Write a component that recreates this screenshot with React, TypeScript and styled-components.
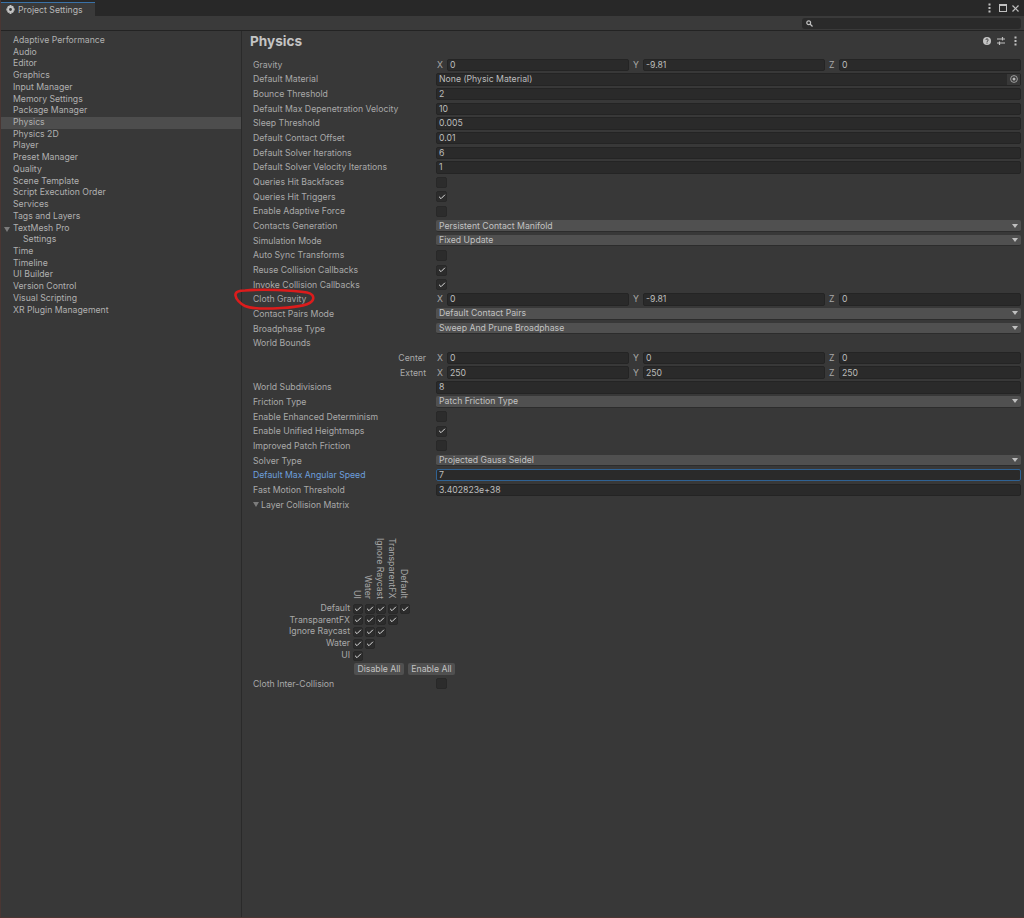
import React from 'react';
import styled, { createGlobalStyle } from 'styled-components';
import { Check } from 'lucide-react';

const GlobalStyle = createGlobalStyle`
  html, body {
    margin: 0;
    padding: 0;
    background: #383838;
  }
  body {
    font-family: Inter, "Liberation Sans", sans-serif;
    font-size: 8.7px;
    color: #b4b4b4;
  }
`;

const Page = styled.div`
  position: relative;
  width: 1024px;
  height: 918px;
  overflow: hidden;
  display: flex;
  flex-direction: column;
  background: #383838;

  &::after {
    content: '';
    position: absolute;
    inset: 0;
    border-left: 1px solid #4a3633;
    border-bottom: 1px solid #4a3633;
    pointer-events: none;
  }
`;

const TabBar = styled.div`
  height: 16px;
  display: flex;
  justify-content: space-between;
  background: #282828;
`;

const Tab = styled.div`
  width: 95px;
  height: 14px;
  margin-top: 2px;
  box-sizing: border-box;
  border-top: 1px solid #3a72a8;
  background: #3a3a3a;
  display: flex;
  align-items: center;
  gap: 3px;
  padding-left: 6px;
  color: #b8b8b8;
`;

const WindowControls = styled.div`
  display: flex;
  align-items: center;
  padding-right: 5px;
  color: #c0c0c0;
`;

const MaximizeSlot = styled.span`
  display: flex;
  margin: 0 5px 0 8px;
`;

const Toolbar = styled.div`
  height: 15px;
  display: flex;
  align-items: center;
  justify-content: flex-end;
  padding-right: 3px;
  box-sizing: border-box;
  background: #3a3a3a;
  border-bottom: 1px solid #232323;
`;

const Search = styled.div`
  width: 219px;
  height: 11px;
  background: #2a2a2a;
  border-radius: 3px;
  display: flex;
  align-items: center;
  padding-left: 4px;
  box-sizing: border-box;
  color: #c0c0c0;
`;

const Body = styled.div`
  flex: 1;
  display: flex;
  min-height: 0;
`;

const Sidebar = styled.div`
  width: 242px;
  box-sizing: border-box;
  padding-top: 4px;
  border-right: 1px solid #2a2a2a;
  background: #383838;
`;

const NavItem = styled.div<{ $selected?: boolean; $indent?: number }>`
  height: 11.72px;
  line-height: 11.72px;
  padding-left: ${(p) => p.$indent ?? 13}px;
  background: ${(p) => (p.$selected ? '#4d4d4d' : 'transparent')};
  color: #b0b0b0;
  white-space: nowrap;
  position: relative;
`;

const NavArrow = styled.span`
  position: absolute;
  left: 4px;
  top: 4px;
  width: 0;
  height: 0;
  border-left: 3px solid transparent;
  border-right: 3px solid transparent;
  border-top: 5px solid #7c7c7c;
`;

const Main = styled.div`
  flex: 1;
  min-width: 0;
  padding: 0 3px 0 11px;
`;

const Header = styled.div`
  height: 26.5px;
  box-sizing: border-box;
  display: flex;
  align-items: center;
  justify-content: space-between;
  padding: 0 4.5px 6px 0;
`;

const Title = styled.div`
  font-size: 13.6px;
  font-weight: 700;
  color: #c4c4c4;
  margin-left: -3px;
`;

const HeaderIcons = styled.div`
  display: flex;
  align-items: center;
  color: #c0c0c0;
`;

const SlidersSlot = styled.span`
  display: flex;
  margin: 0 9px 0 6px;
`;

const Row = styled.div`
  height: 14.66px;
  display: flex;
  align-items: center;
`;

const Label = styled.div<{ $active?: boolean; $sub?: boolean }>`
  width: 183px;
  flex: none;
  box-sizing: border-box;
  white-space: nowrap;
  color: ${(p) => (p.$active ? '#6d9fdc' : '#a9a9a9')};
  text-align: ${(p) => (p.$sub ? 'right' : 'left')};
  padding-right: ${(p) => (p.$sub ? '10px' : '0')};
`;

const Field = styled.div<{ $focused?: boolean }>`
  flex: 1;
  min-width: 0;
  height: 12.5px;
  box-sizing: border-box;
  display: flex;
  align-items: center;
  justify-content: space-between;
  padding-left: 2px;
  background: #2a2a2a;
  color: #bdbdbd;
  border-radius: 2px;
  border: 1px solid ${(p) => (p.$focused ? '#2f6294' : '#242424')};
`;

const Vector = styled.div`
  flex: 1;
  min-width: 0;
  display: flex;
  gap: 3px;
`;

const Axis = styled.div`
  flex: 1;
  min-width: 0;
  display: flex;
  align-items: center;
`;

const AxisName = styled.span`
  width: 11px;
  flex: none;
  padding-left: 1px;
  box-sizing: border-box;
  color: #a9a9a9;
`;

const PickerButton = styled.span`
  width: 13px;
  height: 100%;
  background: #383838;
  display: flex;
  align-items: center;
  justify-content: center;
  color: #b8b8b8;
`;

const Dropdown = styled.div`
  flex: 1;
  height: 11.5px;
  display: flex;
  align-items: center;
  justify-content: space-between;
  padding: 0 3px;
  box-sizing: border-box;
  background: #505050;
  color: #c2c2c2;
  border-radius: 2px;
  border-bottom: 1px solid #2c2c2c;
`;

const Caret = styled.span`
  width: 0;
  height: 0;
  border-left: 3px solid transparent;
  border-right: 3px solid transparent;
  border-top: 4px solid #c0c0c0;
`;

const Box = styled.div<{ $small?: boolean }>`
  width: ${(p) => (p.$small ? '10px' : '11px')};
  height: ${(p) => (p.$small ? '10px' : '11px')};
  flex: none;
  box-sizing: border-box;
  background: #2c2c2c;
  border: 1px solid #282828;
  border-radius: 2px;
  display: flex;
  align-items: center;
  justify-content: center;
  color: #dedede;
`;

const FoldLabel = styled.div`
  display: flex;
  align-items: center;
  gap: 2px;
  color: #a9a9a9;
`;

const FoldArrow = styled.span`
  width: 0;
  height: 0;
  border-left: 3px solid transparent;
  border-right: 3px solid transparent;
  border-top: 5px solid #7c7c7c;
`;

const Matrix = styled.div`
  display: grid;
  grid-template-columns: 98px 1fr;
  padding-top: 24px;
`;

const ColumnHeads = styled.div`
  grid-column: 2;
  height: 67px;
  margin-left: -1px;
  padding-bottom: 4px;
  box-sizing: border-box;
  display: flex;
  align-items: flex-end;
`;

const ColumnHead = styled.div`
  width: 11.72px;
  flex: none;
  writing-mode: vertical-rl;
  line-height: 11.72px;
  white-space: nowrap;
  color: #a9a9a9;
`;

const MatrixLabel = styled.div`
  height: 11.72px;
  line-height: 11.72px;
  text-align: right;
  padding-right: 1px;
  color: #a9a9a9;
  white-space: nowrap;
`;

const MatrixCells = styled.div`
  height: 11.72px;
  display: flex;
  align-items: center;
  gap: 1.72px;
  padding-left: 2px;
`;

const MatrixButtons = styled.div`
  grid-column: 2;
  display: flex;
  gap: 4px;
  padding: 2px 0 0 3px;
`;

const MiniButton = styled.div<{ $width: number }>`
  width: ${(p) => p.$width}px;
  height: 12px;
  line-height: 12px;
  text-align: center;
  background: #505050;
  color: #c2c2c2;
  border-radius: 2px;
`;

const ClothRow = styled(Row)`
  margin-top: 1px;
`;

const RedCircle = styled.svg`
  position: absolute;
  left: 231px;
  top: 287px;
`;

const navItems = [
  'Adaptive Performance', 'Audio', 'Editor', 'Graphics', 'Input Manager', 'Memory Settings',
  'Package Manager', 'Physics', 'Physics 2D', 'Player', 'Preset Manager', 'Quality',
  'Scene Template', 'Script Execution Order', 'Services', 'Tags and Layers', 'TextMesh Pro',
  'Settings', 'Time', 'Timeline', 'UI Builder', 'Version Control', 'Visual Scripting',
  'XR Plugin Management',
];

type Setting =
  | { kind: 'vector'; label: string; values: string[]; sub?: boolean }
  | { kind: 'text'; label: string; value: string; active?: boolean; focused?: boolean; picker?: boolean }
  | { kind: 'check'; label: string; checked: boolean }
  | { kind: 'select'; label: string; value: string }
  | { kind: 'plain'; label: string };

const settings: Setting[] = [
  { kind: 'vector', label: 'Gravity', values: ['0', '-9.81', '0'] },
  { kind: 'text', label: 'Default Material', value: 'None (Physic Material)', picker: true },
  { kind: 'text', label: 'Bounce Threshold', value: '2' },
  { kind: 'text', label: 'Default Max Depenetration Velocity', value: '10' },
  { kind: 'text', label: 'Sleep Threshold', value: '0.005' },
  { kind: 'text', label: 'Default Contact Offset', value: '0.01' },
  { kind: 'text', label: 'Default Solver Iterations', value: '6' },
  { kind: 'text', label: 'Default Solver Velocity Iterations', value: '1' },
  { kind: 'check', label: 'Queries Hit Backfaces', checked: false },
  { kind: 'check', label: 'Queries Hit Triggers', checked: true },
  { kind: 'check', label: 'Enable Adaptive Force', checked: false },
  { kind: 'select', label: 'Contacts Generation', value: 'Persistent Contact Manifold' },
  { kind: 'select', label: 'Simulation Mode', value: 'Fixed Update' },
  { kind: 'check', label: 'Auto Sync Transforms', checked: false },
  { kind: 'check', label: 'Reuse Collision Callbacks', checked: true },
  { kind: 'check', label: 'Invoke Collision Callbacks', checked: true },
  { kind: 'vector', label: 'Cloth Gravity', values: ['0', '-9.81', '0'] },
  { kind: 'select', label: 'Contact Pairs Mode', value: 'Default Contact Pairs' },
  { kind: 'select', label: 'Broadphase Type', value: 'Sweep And Prune Broadphase' },
  { kind: 'plain', label: 'World Bounds' },
  { kind: 'vector', label: 'Center', values: ['0', '0', '0'], sub: true },
  { kind: 'vector', label: 'Extent', values: ['250', '250', '250'], sub: true },
  { kind: 'text', label: 'World Subdivisions', value: '8' },
  { kind: 'select', label: 'Friction Type', value: 'Patch Friction Type' },
  { kind: 'check', label: 'Enable Enhanced Determinism', checked: false },
  { kind: 'check', label: 'Enable Unified Heightmaps', checked: true },
  { kind: 'check', label: 'Improved Patch Friction', checked: false },
  { kind: 'select', label: 'Solver Type', value: 'Projected Gauss Seidel' },
  { kind: 'text', label: 'Default Max Angular Speed', value: '7', active: true, focused: true },
  { kind: 'text', label: 'Fast Motion Threshold', value: '3.402823e+38' },
];

const layers = ['Default', 'TransparentFX', 'Ignore Raycast', 'Water', 'UI'];

const Tick = () => <Check size={8} strokeWidth={3} />;

const Kebab = () => (
  <svg width="3" height="10" viewBox="0 0 3 10" fill="currentColor">
    <rect x="0.5" y="0.5" width="2" height="2" />
    <rect x="0.5" y="4" width="2" height="2" />
    <rect x="0.5" y="7.5" width="2" height="2" />
  </svg>
);

const Gear = () => (
  <svg width="9" height="9" viewBox="0 0 10 10" fill="#c4c4c4">
    <path
      fillRule="evenodd"
      d="M4 0h2l.3 1.4 1-.5 1.5 1.4-.6 1.1L9.600 4v2l-1.400.4.600 1.100-1.500 1.400-1-.5L6 10H4l-.3-1.600-1 .5L1.200 7.500l.6-1.100L.4 6V4l1.400-.5-.6-1.100L2.700.900l1 .5L4 0zM5 3.400a1.600 1.600 0 1 0 0 3.200 1.600 1.600 0 0 0 0-3.200z"
    />
  </svg>
);

const Maximize = () => (
  <svg width="8" height="8" viewBox="0 0 8 8" fill="none" stroke="currentColor">
    <rect x="0.5" y="0.5" width="7" height="7" />
    <line x1="0" y1="1.500" x2="8" y2="1.500" />
  </svg>
);

const CloseIcon = () => (
  <svg width="7" height="7" viewBox="0 0 7 7" stroke="currentColor" strokeWidth="1.200">
    <line x1="0.500" y1="0.500" x2="6.500" y2="6.500" />
    <line x1="6.500" y1="0.500" x2="0.500" y2="6.500" />
  </svg>
);

const SearchIcon = () => (
  <svg width="7" height="7" viewBox="0 0 7 7" fill="none" stroke="currentColor" strokeWidth="1.200">
    <circle cx="2.700" cy="2.700" r="1.900" />
    <line x1="4" y1="4" x2="6.500" y2="6.500" />
  </svg>
);

const Help = () => (
  <svg width="8" height="8" viewBox="0 0 8 8">
    <circle cx="4" cy="4" r="4" fill="#c4c4c4" />
    <path d="M2.800 3a1.200 1.100 0 1 1 1.800 1c-.5.300-.6.500-.6.900" fill="none" stroke="#383838" strokeWidth="1" />
    <rect x="3.500" y="5.600" width="1" height="1" fill="#383838" />
  </svg>
);

const Sliders = () => (
  <svg width="8" height="8" viewBox="0 0 8 8" stroke="currentColor" fill="none">
    <path d="M0 2h8M0 6h8" />
    <path d="M5.500 0v3.500M2.500 4.500V8" strokeWidth="1.200" />
  </svg>
);

const Target = () => (
  <svg width="8" height="8" viewBox="0 0 8 8" fill="none">
    <circle cx="4" cy="4" r="3.400" stroke="currentColor" strokeWidth="0.800" />
    <circle cx="4" cy="4" r="1.500" fill="currentColor" />
  </svg>
);

const SettingRow = ({ item }: { item: Setting }) => {
  if (item.kind === 'vector') {
    return (
      <Row>
        <Label $sub={item.sub}>{item.label}</Label>
        <Vector>
          {item.values.map((value, i) => (
            <Axis key={'XYZ'[i]}>
              <AxisName>{'XYZ'[i]}</AxisName>
              <Field>{value}</Field>
            </Axis>
          ))}
        </Vector>
      </Row>
    );
  }
  if (item.kind === 'text') {
    return (
      <Row>
        <Label $active={item.active}>{item.label}</Label>
        <Field $focused={item.focused}>
          {item.value}
          {item.picker && (
            <PickerButton>
              <Target />
            </PickerButton>
          )}
        </Field>
      </Row>
    );
  }
  if (item.kind === 'check') {
    return (
      <Row>
        <Label>{item.label}</Label>
        <Box>{item.checked && <Tick />}</Box>
      </Row>
    );
  }
  if (item.kind === 'select') {
    return (
      <Row>
        <Label>{item.label}</Label>
        <Dropdown>
          {item.value}
          <Caret />
        </Dropdown>
      </Row>
    );
  }
  return (
    <Row>
      <Label>{item.label}</Label>
    </Row>
  );
};

const App = () => (
  <Page>
    <GlobalStyle />
    <TabBar>
      <Tab>
        <Gear />
        Project Settings
      </Tab>
      <WindowControls>
        <Kebab />
        <MaximizeSlot>
          <Maximize />
        </MaximizeSlot>
        <CloseIcon />
      </WindowControls>
    </TabBar>
    <Toolbar>
      <Search>
        <SearchIcon />
      </Search>
    </Toolbar>
    <Body>
      <Sidebar>
        {navItems.map((name) => (
          <NavItem key={name} $selected={name === 'Physics'} $indent={name === 'Settings' ? 23 : 13}>
            {name === 'TextMesh Pro' && <NavArrow />}
            {name}
          </NavItem>
        ))}
      </Sidebar>
      <Main>
        <Header>
          <Title>Physics</Title>
          <HeaderIcons>
            <Help />
            <SlidersSlot>
              <Sliders />
            </SlidersSlot>
            <Kebab />
          </HeaderIcons>
        </Header>
        {settings.map((item) => (
          <SettingRow key={item.label} item={item} />
        ))}
        <Row>
          <FoldLabel>
            <FoldArrow />
            Layer Collision Matrix
          </FoldLabel>
        </Row>
        <Matrix>
          <ColumnHeads>
            {[...layers].reverse().map((name) => (
              <ColumnHead key={name}>{name}</ColumnHead>
            ))}
          </ColumnHeads>
          {layers.map((name, row) => (
            <React.Fragment key={name}>
              <MatrixLabel>{name}</MatrixLabel>
              <MatrixCells>
                {layers.slice(row).map((cell) => (
                  <Box key={cell} $small>
                    <Tick />
                  </Box>
                ))}
              </MatrixCells>
            </React.Fragment>
          ))}
          <MatrixButtons>
            <MiniButton $width={50}>Disable All</MiniButton>
            <MiniButton $width={47}>Enable All</MiniButton>
          </MatrixButtons>
        </Matrix>
        <ClothRow>
          <Label>Cloth Inter-Collision</Label>
          <Box />
        </ClothRow>
      </Main>
    </Body>
    <RedCircle width="86" height="26" viewBox="0 0 86 26" fill="none">
      <path
        d="M14 3.500C30 2 62 3 76 5.500C81 6.500 83 9 82 12.500C80 18 68 20 50 21C34 22 20 21.500 14 19C9 16.500 5 12 4.500 8.500C4 5 8 3.500 14 3.500Z"
        stroke="#dc1c1c"
        strokeWidth="2.600"
      />
    </RedCircle>
  </Page>
);

export default App;
